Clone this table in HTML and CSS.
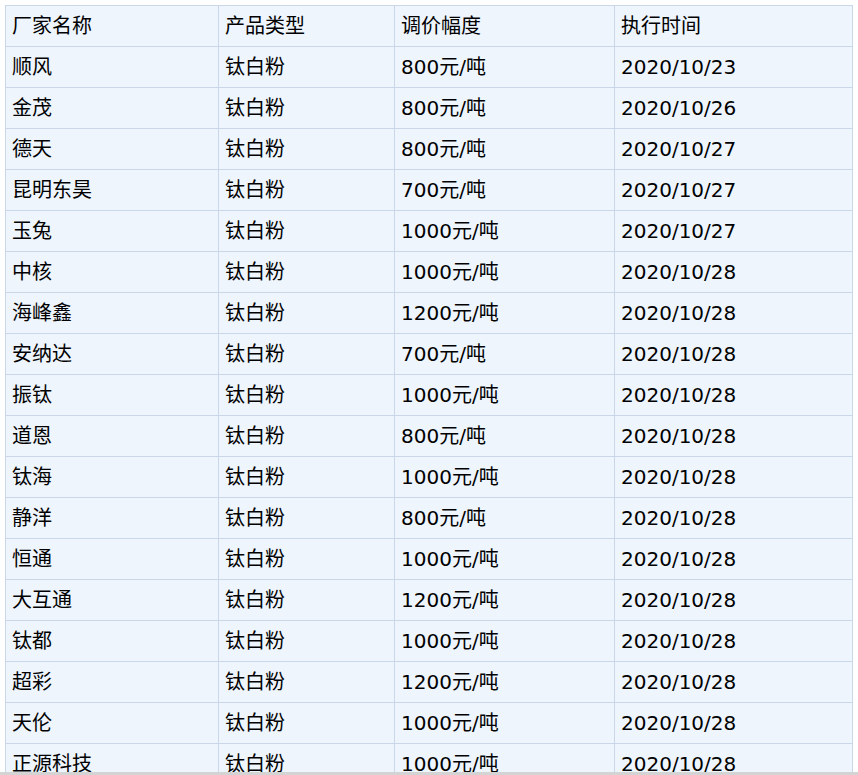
FILE: index.html
```html
<!DOCTYPE html>
<html lang="zh-CN">
<head>
<meta charset="utf-8">
<title>调价</title>
<link rel="stylesheet" href="styles.css">
</head>
<body>
<div class="wrap">
<table class="price-table">
<colgroup>
<col class="c1"><col class="c2"><col class="c3"><col class="c4">
</colgroup>
<tr><td>厂家名称</td><td>产品类型</td><td>调价幅度</td><td>执行时间</td></tr>
<tr><td>顺风</td><td>钛白粉</td><td>800元/吨</td><td>2020/10/23</td></tr>
<tr><td>金茂</td><td>钛白粉</td><td>800元/吨</td><td>2020/10/26</td></tr>
<tr><td>德天</td><td>钛白粉</td><td>800元/吨</td><td>2020/10/27</td></tr>
<tr><td>昆明东昊</td><td>钛白粉</td><td>700元/吨</td><td>2020/10/27</td></tr>
<tr><td>玉兔</td><td>钛白粉</td><td>1000元/吨</td><td>2020/10/27</td></tr>
<tr><td>中核</td><td>钛白粉</td><td>1000元/吨</td><td>2020/10/28</td></tr>
<tr><td>海峰鑫</td><td>钛白粉</td><td>1200元/吨</td><td>2020/10/28</td></tr>
<tr><td>安纳达</td><td>钛白粉</td><td>700元/吨</td><td>2020/10/28</td></tr>
<tr><td>振钛</td><td>钛白粉</td><td>1000元/吨</td><td>2020/10/28</td></tr>
<tr><td>道恩</td><td>钛白粉</td><td>800元/吨</td><td>2020/10/28</td></tr>
<tr><td>钛海</td><td>钛白粉</td><td>1000元/吨</td><td>2020/10/28</td></tr>
<tr><td>静洋</td><td>钛白粉</td><td>800元/吨</td><td>2020/10/28</td></tr>
<tr><td>恒通</td><td>钛白粉</td><td>1000元/吨</td><td>2020/10/28</td></tr>
<tr><td>大互通</td><td>钛白粉</td><td>1200元/吨</td><td>2020/10/28</td></tr>
<tr><td>钛都</td><td>钛白粉</td><td>1000元/吨</td><td>2020/10/28</td></tr>
<tr><td>超彩</td><td>钛白粉</td><td>1200元/吨</td><td>2020/10/28</td></tr>
<tr><td>天伦</td><td>钛白粉</td><td>1000元/吨</td><td>2020/10/28</td></tr>
<tr><td>正源科技</td><td>钛白粉</td><td>1000元/吨</td><td>2020/10/28</td></tr>
</table>
</div>
<div class="edge"></div>
</body>
</html>
```
FILE: styles.css
```css
html, body {
  margin: 0;
  padding: 0;
  background: #ffffff;
  overflow: hidden;
}
.wrap {
  padding: 5px 0 0 5px;
}
.price-table {
  border-collapse: collapse;
  table-layout: fixed;
  width: 847px;
  background: #eef5fd;
  font-family: "DejaVu Sans", "Noto Sans CJK SC", sans-serif;
  font-size: 20px;
  color: #000000;
}
.c1 { width: 213px; }
.c2 { width: 176px; }
.c3 { width: 220px; }
.c4 { width: 238px; }
.price-table td {
  border: 1px solid #c9d7e9;
  height: 39px;
  padding: 1px 6px 0;
  line-height: 39px;
  white-space: nowrap;
  vertical-align: middle;
}
.edge {
  position: fixed;
  left: 0;
  right: 0;
  bottom: 0;
  height: 3px;
  background: #d4d4d4;
}
```
